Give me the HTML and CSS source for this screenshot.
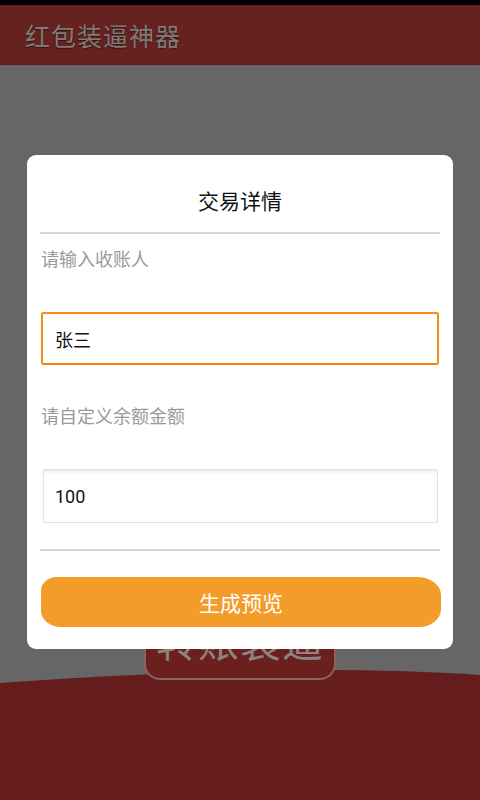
FILE: index.html
```html
<!DOCTYPE html>
<html lang="zh">
<head>
<meta charset="utf-8">
<link rel="stylesheet" href="styles.css">
</head>
<body>
<div class="app">
  <div class="statusbar"></div>
  <header class="appbar"><span class="appbar-title">红包装逼神器</span></header>
  <main class="content">
    <div class="spacer"></div>
    <div class="bg-action"><span>转账装逼</span></div>
    <div class="ground">
      <svg class="wave" width="480" height="16" viewBox="0 0 480 16" preserveAspectRatio="none">
        <path d="M0,15 Q290,-6 480,7 L480,16 L0,16 Z" fill="#651c1c"/>
      </svg>
      <div class="ground-fill"></div>
    </div>
  </main>
</div>
<div class="overlay">
  <div class="dialog">
    <h2 class="dialog-title">交易详情</h2>
    <div class="divider"></div>
    <label class="field-label">请输入收账人</label>
    <div class="input input-focused">张三</div>
    <label class="field-label">请自定义余额金额</label>
    <div class="input input-plain">100</div>
    <div class="divider divider-2"></div>
    <div class="primary-btn">生成预览</div>
  </div>
</div>
</body>
</html>
```
FILE: styles.css
```css
* { box-sizing: border-box; }
html, body { margin: 0; padding: 0; }
body {
  width: 480px;
  height: 800px;
  overflow: hidden;
  font-family: Roboto, "Noto Sans CJK SC", sans-serif;
  background: #666666;
}
.app {
  height: 800px;
  display: flex;
  flex-direction: column;
}
.statusbar {
  height: 5px;
  background: #000;
}
.appbar {
  height: 60px;
  background: #65221f;
  border-bottom: 1px solid #5a1e1b;
  display: flex;
  align-items: center;
  padding-left: 25px;
}
.appbar-title {
  font-size: 25px;
  color: #7f7b79;
  letter-spacing: 1px;
  text-shadow: 0 1px 1px #3a1210;
}
.content {
  flex: 1;
  display: flex;
  flex-direction: column;
  background: #666666;
}
.spacer { flex: 1; }
.bg-action {
  align-self: center;
  width: 192px;
  height: 80px;
  margin-bottom: -12px;
  position: relative;
  z-index: 1;
  background: #6c201d;
  border: 2px solid #8a6360;
  border-top: none;
  border-radius: 16px;
  display: flex;
  align-items: center;
  justify-content: center;
}
.bg-action span {
  font-size: 41px;
  color: #8c8483;
  letter-spacing: 1px;
}
.ground {
  height: 132px;
  display: flex;
  flex-direction: column;
}
.wave {
  display: block;
  flex-shrink: 0;
}
.ground-fill {
  flex: 1;
  background: #651c1c;
}

.overlay {
  position: fixed;
  inset: 0;
  z-index: 10;
  display: flex;
  justify-content: center;
  align-items: flex-start;
  padding-top: 155px;
}
.dialog {
  width: 426px;
  height: 494px;
  background: #ffffff;
  border-radius: 9px;
  padding: 0 13px 22px;
  display: flex;
  flex-direction: column;
}
.dialog-title {
  margin: 0;
  padding-top: 34px;
  height: 77px;
  line-height: 26px;
  text-align: center;
  font-size: 21px;
  font-weight: normal;
  color: #111;
}
.divider {
  height: 2px;
  background: #d6d6d6;
  flex-shrink: 0;
}
.field-label {
  display: block;
  margin: 14px 0 0 1px;
  height: 24px;
  line-height: 24px;
  font-size: 18px;
  color: #9a9a9a;
}
.input {
  display: flex;
  align-items: center;
  font-size: 18px;
  color: #111;
  background: #fff;
}
.input-focused {
  margin: 40px 1px 0 1px;
  height: 53px;
  border: 2px solid #f2901e;
  border-bottom-color: #ee8714;
  border-radius: 3px;
  padding-left: 12px;
  box-shadow: 0 0 1px rgba(240,140,30,0.5);
}
.input-focused + .field-label { margin-top: 40px; }
.input-plain {
  margin: 40px 2px 0 3px;
  height: 54px;
  border: 1px solid #e2e2e2;
  border-radius: 1px;
  padding-left: 11px;
  box-shadow: inset 0 3px 4px -2px rgba(0,0,0,0.12);
}
.divider-2 { margin-top: 26px; }
.primary-btn {
  margin: 26px -1px 0 1px;
  height: 50px;
  background: #f39c2a;
  border-radius: 16px 24px 22px 20px / 14px 18px 18px 16px;
  display: flex;
  align-items: center;
  justify-content: center;
  color: #fff;
  font-size: 21px;
}
```
